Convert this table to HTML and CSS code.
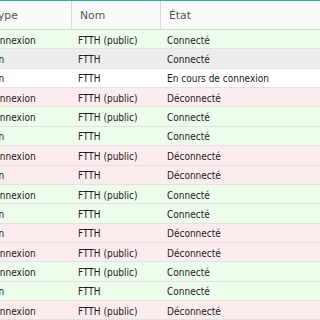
FILE: index.html
```html
<!DOCTYPE html>
<html lang="fr">
<head>
<meta charset="utf-8">
<title>Connexions</title>
<link rel="stylesheet" href="styles.css">
</head>
<body>
<div class="grid">
  <div class="row head">
    <div class="cell c1">Type</div>
    <div class="cell c2">Nom</div>
    <div class="cell c3">État</div>
  </div>
  <div class="row ok"><div class="cell c1">Connexion</div><div class="cell c2">FTTH (public)</div><div class="cell c3">Connecté</div></div>
  <div class="row sel"><div class="cell c1">Lan</div><div class="cell c2">FTTH</div><div class="cell c3">Connecté</div></div>
  <div class="row"><div class="cell c1">Lan</div><div class="cell c2">FTTH</div><div class="cell c3">En cours de connexion</div></div>
  <div class="row ko"><div class="cell c1">Connexion</div><div class="cell c2">FTTH (public)</div><div class="cell c3">Déconnecté</div></div>
  <div class="row ok"><div class="cell c1">Connexion</div><div class="cell c2">FTTH (public)</div><div class="cell c3">Connecté</div></div>
  <div class="row ok"><div class="cell c1">Lan</div><div class="cell c2">FTTH</div><div class="cell c3">Connecté</div></div>
  <div class="row ko"><div class="cell c1">Connexion</div><div class="cell c2">FTTH (public)</div><div class="cell c3">Déconnecté</div></div>
  <div class="row ko"><div class="cell c1">Lan</div><div class="cell c2">FTTH</div><div class="cell c3">Déconnecté</div></div>
  <div class="row ok"><div class="cell c1">Connexion</div><div class="cell c2">FTTH (public)</div><div class="cell c3">Connecté</div></div>
  <div class="row ok"><div class="cell c1">Lan</div><div class="cell c2">FTTH</div><div class="cell c3">Connecté</div></div>
  <div class="row ko"><div class="cell c1">Lan</div><div class="cell c2">FTTH</div><div class="cell c3">Déconnecté</div></div>
  <div class="row ko"><div class="cell c1">Connexion</div><div class="cell c2">FTTH (public)</div><div class="cell c3">Déconnecté</div></div>
  <div class="row ok"><div class="cell c1">Connexion</div><div class="cell c2">FTTH (public)</div><div class="cell c3">Connecté</div></div>
  <div class="row ok"><div class="cell c1">Lan</div><div class="cell c2">FTTH</div><div class="cell c3">Connecté</div></div>
  <div class="row ko"><div class="cell c1">Connexion</div><div class="cell c2">FTTH (public)</div><div class="cell c3">Déconnecté</div></div>
</div>
</body>
</html>
```
FILE: styles.css
```css
html, body {
  margin: 0;
  padding: 0;
  overflow: hidden;
  background: #ffffff;
}
.grid {
  margin-left: -20px;
  width: 340px;
  border-top: 1px solid #3aa39b;
  font-family: "DejaVu Sans Condensed", "DejaVu Sans", sans-serif;
  font-size: 10px;
  color: #1a1a1a;
}
.row {
  display: grid;
  grid-template-columns: 92px 89px 1fr;
  height: 18.36px;
  border-bottom: 1px solid #e2e2e2;
  align-items: center;
  white-space: nowrap;
}
.cell {
  padding-left: 6px;
  padding-top: 2px;
  overflow: hidden;
}
.c1 { padding-left: 8px; }
.head {
  height: 28px;
  background: #fafafa;
  border-bottom: 1px solid #d9d9d9;
  align-items: stretch;
  font-family: "DejaVu Sans", sans-serif;
  font-size: 10.8px;
  color: #555555;
}
.head .cell {
  display: flex;
  align-items: center;
  padding-left: 8px;
  padding-top: 0;
}
.head .c1 { padding-left: 13px; }
.head .c1, .head .c2 { border-right: 1px solid #dadada; }
.ok { background: #eefcec; }
.ko { background: #fdeced; }
.sel { background: #ececec; }
```
